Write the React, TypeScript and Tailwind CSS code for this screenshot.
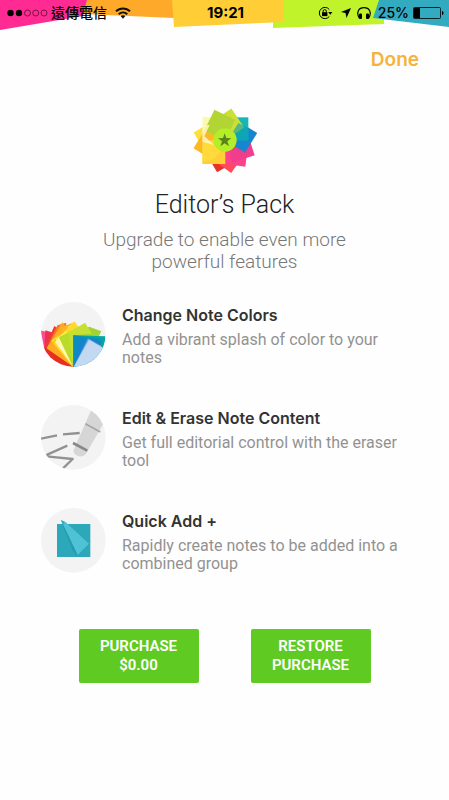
import type { ReactNode } from 'react';

function PaperStrip() {
  return (
    <svg className="absolute inset-0 h-full w-full" viewBox="0 0 449 30" preserveAspectRatio="none" aria-hidden="true">
      <path fill="#ff2b93" d="M0 0h88L83 16 0 30z" />
      <path fill="#ffa92b" d="M87 0h87v18L83 14z" />
      <path fill="#c1f32b" d="M280 0h104v24l-111 4v-7z" />
      <path fill="#ffce36" d="M172 0h112v22l-110 5z" />
      <path fill="#32abc0" d="M379 0h70v27l-76-9z" />
    </svg>
  );
}

function StatusBar() {
  return (
    <header className="relative h-[30px] font-[Inter,'Noto_Sans_CJK_TC',sans-serif] text-black">
      <PaperStrip />
      <div className="relative grid h-[25px] grid-cols-[1fr_auto_1fr] items-center pr-[5px] pl-[7px]">
        <div className="flex items-center">
          <svg width="41" height="8" viewBox="0 0 41 8" aria-hidden="true">
            <circle cx="3.5" cy="4" r="3.2" />
            <circle cx="12" cy="4" r="3.2" />
            <g fill="none" stroke="#000" strokeWidth=".7" opacity=".75">
              <circle cx="20.5" cy="4" r="3" />
              <circle cx="28.7" cy="4" r="3" />
              <circle cx="37" cy="4" r="3" />
            </g>
          </svg>
          <span className="ml-[3px] text-sm leading-5 font-medium">遠傳電信</span>
          <svg className="ml-2" width="16" height="12" viewBox="0 0 16 12" aria-hidden="true">
            <g fill="none" stroke="#111" strokeWidth="2">
              <path d="M1 4.3C5 .4 11 .4 15 4.3" />
              <path d="M3.7 7.2c2.5-2.4 6.1-2.4 8.6 0" />
            </g>
            <path d="M5.6 9.1c1.4-1.2 3.4-1.2 4.8 0L8 11.7z" fill="#111" />
          </svg>
        </div>
        <time className="text-[15px] leading-5 font-bold">19:21</time>
        <div className="flex items-center justify-end">
          <svg width="54" height="16" viewBox="0 0 54 16" aria-hidden="true">
            <path d="M11.3 4.500A5.600 5.600 0 1 0 11.300 11.500" fill="none" stroke="#000" strokeWidth="1" />
            <path d="M10.200 7h4.200l-2.100 2.700z" />
            <path d="M4 7.200h5.400v3.900H4z" />
            <path d="M5.100 7.500V6.200a1.600 1.600 0 0 1 3.200 0v1.300" fill="none" stroke="#000" strokeWidth="1" />
            <path d="M33 3 28.500 13l-1-5-4.500-1z" />
            <path d="M41.500 13.500C37.500 7 41 2.700 46 2.700S54.500 7 50.500 13.500" fill="none" stroke="#000" strokeWidth="1.200" />
            <rect x="41" y="8.500" width="3" height="5.500" rx="1" />
            <rect x="48" y="8.500" width="3" height="5.500" rx="1" />
          </svg>
          <span className="ml-1.5 text-sm leading-5 font-medium">25%</span>
          <svg className="ml-1" width="31" height="12" viewBox="0 0 31 12" aria-hidden="true">
            <rect x=".5" y=".5" width="27" height="11" rx="1" fill="none" stroke="#000" strokeWidth=".8" />
            <path d="M1 1h6v10H1z" />
            <path d="M29 4c2 .5 2 3.500 0 4z" />
          </svg>
        </div>
      </div>
    </header>
  );
}

// Paper squares sharing one corner at the centre, listed bottom to top.
const petals = [
  { turn: 150, fill: '#e73224' },
  { turn: 125, fill: '#ff4a5c' },
  { turn: 98, fill: '#fd4387' },
  { turn: 72, fill: '#f23c8c' },
  { turn: 32, fill: '#1687cf' },
  { turn: 0, fill: '#16b5b7' },
  { turn: 272, fill: '#fbf9ae' },
  { turn: 240, fill: '#ffe03a' },
  { turn: 212, fill: '#fbb925' },
  { turn: 180, fill: '#ffcf38' },
  { turn: 326, fill: '#cbdf38' },
  { turn: 296, fill: '#b3d435' },
];

function PackLogo() {
  return (
    <svg width="66" height="66" viewBox="38 28 196 198" aria-hidden="true">
      {petals.map((petal) => (
        <rect key={petal.turn} x="137" y="59" width="69" height="69" fill={petal.fill} transform={`rotate(${petal.turn} 137 129)`} />
      ))}
      <path fill="#079db4" d="m176 76 30 16v36h-62z" opacity=".6" />
      <path fill="#ffe33c" d="m68 134 56-13 10 28-32 35-34 9z" opacity=".55" />
      <path fill="#fffbd0" d="m68 82 22 0-16 34 30 26-36-10z" opacity=".8" />
      <circle cx="136" cy="127" r="35" fill="#b5ed28" />
      <path fill="#58841d" d="m135 107 5 14 15 1-12 9 5 15-13-9-13 9 5-15-12-9 15-1z" />
    </svg>
  );
}

function ColorsIcon() {
  return (
    <svg className="size-[65px] shrink-0" viewBox="35 21 195 195" aria-hidden="true">
      <defs><clipPath id="fan"><circle cx="132" cy="118" r="97" /></clipPath></defs>
      <g clipPath="url(#fan)">
        <path fill="#f3f3f3" d="M34 20h200v200H34z" />
        <path fill="#ff4c91" d="m34 106 40 10 61 100-85-29z" />
        <path fill="#ef3150" d="m48 106 45 14 41 97-89-56z" />
        <path fill="#e8412d" d="m75 93 35 24 22 100-86-58z" />
        <path fill="#ff7428" d="m84 91 26-8 21 134-80-54z" />
        <path fill="#ffad20" d="m99 82 10 13 22 122-80-55z" />
        <path fill="#e82e1e" d="m47 157 84 58-38 5-50-48z" />
        <path fill="#ffda29" d="m137 80 20 33-25 104-66-80z" />
        <path fill="#ffb51b" d="m137 80-20 15-58 66 46-67z" />
        <path fill="#fff055" d="m78 131 33-22 21 107z" />
        <path fill="#fff8b5" d="m77 140 15-12 40 88z" />
        <path fill="#e1e83c" d="m169 84 10 47-47 86-26-100z" />
        <path fill="#a1d337" d="m180 95 36 14-24 47-60 61-22-94z" />
        <path fill="#c7df33" d="m89 127 78-43 21 32-56 5v96z" />
        <path fill="#b9dc28" d="m89 127 29-13 14 103z" />
        <path fill="#07a6a4" d="m132 121 96 3-5 57-91 36z" />
        <path fill="#078fbd" d="m132 121 81 10-44 54-37 32z" />
        <path fill="#1684cb" d="m149 130 69 8-27 64-59 16z" />
        <path fill="#70a9e3" d="m176 130 40 23-26 70-58-5z" />
        <path fill="#c3d9f2" d="m179 134 42 24-21 65-68-5z" />
      </g>
    </svg>
  );
}

function EraserIcon() {
  return (
    <svg className="size-[65px] shrink-0" viewBox="33 20 195 195" aria-hidden="true">
      <defs><clipPath id="eraser"><circle cx="130" cy="117" r="97" /></clipPath></defs>
      <g clipPath="url(#eraser)">
        <path fill="#f3f3f3" d="M30 18h200v200H30z" />
        <path fill="#d6d6d6" d="M183 37c15 0 39 24 38 38l-53 91c-14 18-44 3-36-15z" />
        <path stroke="#a6a6a6" strokeWidth="5" d="m166 76 45 25" />
        <path stroke="#888" strokeWidth="8" d="m129 134 43 23" />
        <path fill="none" stroke="#929292" strokeWidth="7" strokeLinejoin="round" d="m33 121 48-10m18-3 50-4M112 142l-60 27c-4 4 0 6 5 6l71 7-29 28" />
      </g>
    </svg>
  );
}

function QuickAddIcon() {
  return (
    <svg className="size-[65px] shrink-0" viewBox="33 24 195 195" aria-hidden="true">
      <circle cx="130" cy="121" r="97" fill="#f3f3f3" />
      <path fill="#2da7ba" d="M81 72h100v99H81z" />
      <path fill="#249bad" d="m96 72 14-3 34 102-15-18z" />
      <path fill="#4fc3d5" d="m93 60 14 7 70 64-34 34z" />
      <path fill="#35a8bb" d="m93 60 12 6-7 8z" />
    </svg>
  );
}

function Feature({ icon, title, children }: { icon: ReactNode; title: string; children: ReactNode }) {
  return (
    <li className="flex gap-4">
      {icon}
      <div className="pt-px">
        <h2 className="font-[Inter,sans-serif] text-base leading-6 font-semibold text-[#333]">{title}</h2>
        <p className="mt-1 text-base leading-[18px] font-normal text-[#929292]">{children}</p>
      </div>
    </li>
  );
}

export default function App() {
  return (
    <div className="min-h-screen bg-[#fefefe] font-[Roboto,'Noto_Sans_CJK_TC',sans-serif]">
      <StatusBar />
      <div className="flex justify-end px-[30px] pt-4">
        <button type="button" className="font-[Inter,sans-serif] text-[19px] leading-7 font-semibold text-[#f5b33b]">Done</button>
      </div>
      <main>
        <section className="flex flex-col items-center px-20 pt-[33px] text-center">
          <PackLogo />
          <h1 className="mt-4 text-[25px] leading-8 font-light text-[#222]">Editor’s Pack</h1>
          <p className="mt-2 max-w-64 text-[19px] leading-[22px] font-light text-[#777]">
            Upgrade to enable even more powerful features
          </p>
        </section>
        <ul className="mt-[29px] flex flex-col gap-[38px] pr-10 pl-[41px]">
          <Feature icon={<ColorsIcon />} title="Change Note Colors">Add a vibrant splash of color to your notes</Feature>
          <Feature icon={<EraserIcon />} title="Edit & Erase Note Content">Get full editorial control with the eraser tool</Feature>
          <Feature icon={<QuickAddIcon />} title="Quick Add +">Rapidly create notes to be added into a combined group</Feature>
        </ul>
        <div className="mt-14 flex justify-center gap-[52px]">
          <button type="button" className="w-[120px] rounded-xs bg-[#5fcb22] px-4 py-2 text-[15px] leading-[19px] font-semibold text-white">PURCHASE<br />$0.00</button>
          <button type="button" className="w-[120px] rounded-xs bg-[#5fcb22] px-4 py-2 text-[15px] leading-[19px] font-semibold text-white">RESTORE PURCHASE</button>
        </div>
      </main>
    </div>
  );
}
